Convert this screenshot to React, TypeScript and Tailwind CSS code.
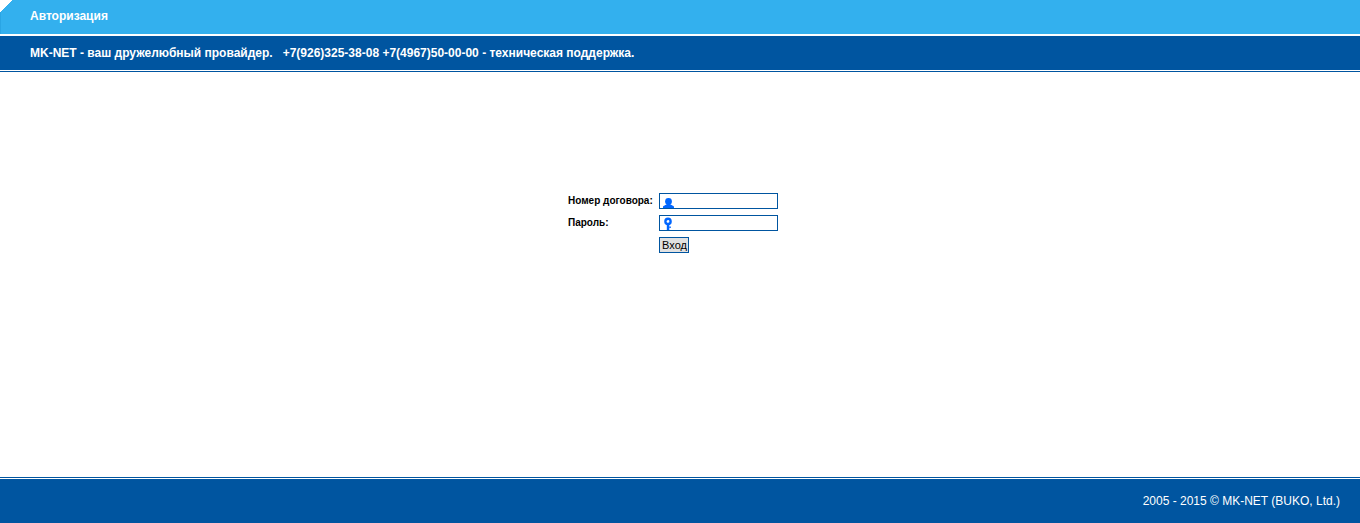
export default function App() {
  return (
    <div className="flex h-[523px] flex-col bg-white font-['Liberation_Sans',Arial,sans-serif]">
      <div className="relative flex h-[34px] shrink-0 items-center border-l border-[#2aa5e4] bg-[#33b0ee] pl-[29px] pb-[3px] text-[12px] font-bold text-white">
        <svg className="absolute -left-px top-0" width="13" height="13" viewBox="0 0 13 13" shapeRendering="crispEdges">
          <path d="M0 0H12L0 12Z" fill="#ffffff" />
        </svg>
        Авторизация
      </div>
      <div className="mt-[2px] flex h-[34px] shrink-0 items-center bg-[#0055a0] pl-[30px] text-[12px] font-bold whitespace-pre text-white">
        {"MK-NET - ваш дружелюбный провайдер.   +7(926)325-38-08 +7(4967)50-00-00 - техническая поддержка."}
      </div>
      <div className="mt-[1px] h-px shrink-0 bg-[#0055a0]" />
      <div className="flex-1 pt-[121px] pl-[568px]">
        <div className="grid grid-cols-[91px_119px] grid-rows-[16px_16px_16px] gap-y-[6px] text-[10px] font-bold text-black">
          <div className="pt-px leading-[14px]">Номер договора:</div>
          <div className="relative h-[16px] overflow-hidden border border-[#0055a0] bg-white">
            <svg className="absolute left-[3px] top-[4px]" width="11" height="10" viewBox="0 0 11 10">
              <circle cx="5.5" cy="3.4" r="3.4" fill="#0066ff" />
              <path d="M0 10V9C0 7.5 3 7.2 4 6H7C8 7.2 11 7.5 11 9V10Z" fill="#0066ff" />
            </svg>
          </div>
          <div className="pt-px leading-[14px]">Пароль:</div>
          <div className="relative h-[16px] overflow-hidden border border-[#0055a0] bg-white">
            <svg className="absolute left-[4px] top-[1px]" width="8" height="13" viewBox="0 0 8 13">
              <circle cx="4" cy="4.4" r="2.6" fill="none" stroke="#0066ff" strokeWidth="2.4" />
              <path d="M2.8 7H5.3V13H2.8Z" fill="#0066ff" />
              <path d="M5.3 9.5H6.8V11H5.3Z" fill="#0066ff" />
            </svg>
          </div>
          <div />
          <button className="flex h-[16px] w-[30px] items-center justify-center border border-[#0055a0] bg-[#e1e1e1] pl-px text-[11px] font-normal text-black">
            Вход
          </button>
        </div>
      </div>
      <div className="h-px shrink-0 bg-[#0055a0]" />
      <div className="mt-[1px] flex h-[44px] shrink-0 items-center justify-end bg-[#0055a0] pr-[20px] pb-[1px] text-[12px] text-white">
        2005 - 2015 © MK-NET (BUKO, Ltd.)
      </div>
    </div>
  );
}
